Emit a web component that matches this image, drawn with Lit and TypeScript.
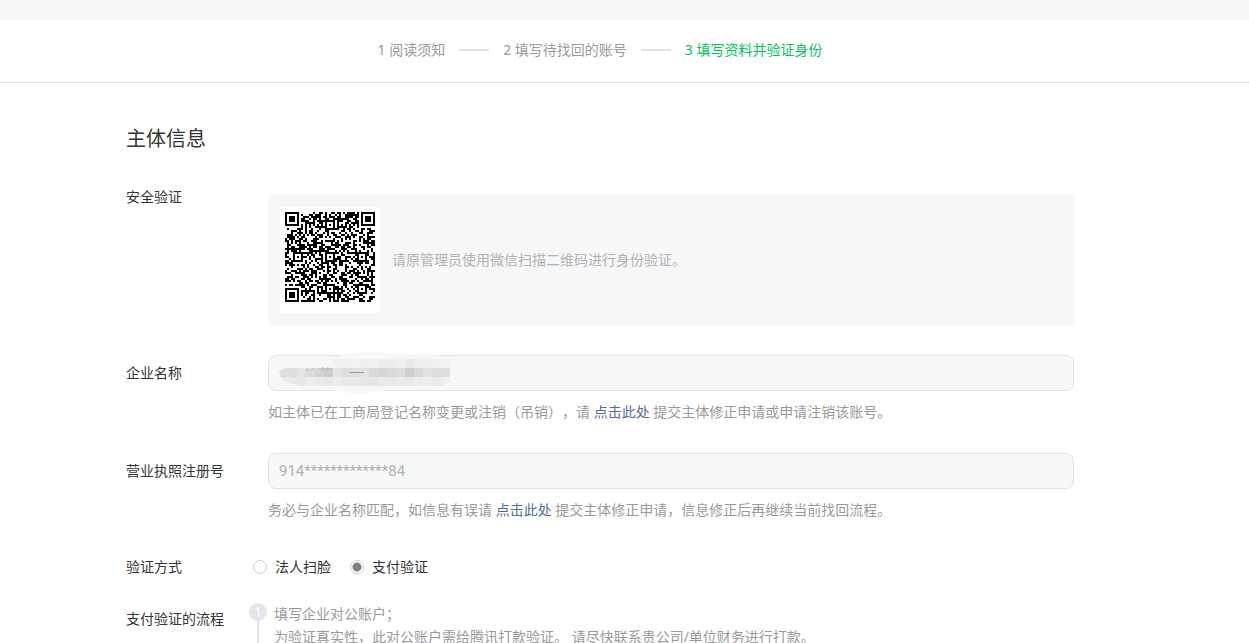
import { LitElement, html, svg, css } from "lit";
import { customElement, state } from "lit/decorators.js";

const QR_SIZE = 45;

/** Builds the dark modules of a 45 x 45 code as one SVG path. */
function buildQrPath(): string {
  const grid: boolean[][] = [];
  let seed = 20731;
  for (let y = 0; y < QR_SIZE; y++) {
    const row: boolean[] = [];
    for (let x = 0; x < QR_SIZE; x++) {
      seed = (seed * 1103515245 + 12345) % 2147483648;
      row.push(seed / 2147483648 > 0.47);
    }
    grid.push(row);
  }
  for (let i = 8; i < QR_SIZE - 8; i++) {
    grid[6][i] = i % 2 === 0;
    grid[i][6] = i % 2 === 0;
  }
  const square = (cx: number, cy: number, reach: number, light: number[]) => {
    for (let dy = -reach; dy <= reach; dy++) {
      for (let dx = -reach; dx <= reach; dx++) {
        const y = cy + dy;
        const x = cx + dx;
        if (y < 0 || x < 0 || y >= QR_SIZE || x >= QR_SIZE) continue;
        grid[y][x] = !light.includes(Math.max(Math.abs(dx), Math.abs(dy)));
      }
    }
  };
  for (const cy of [6, 22, 38]) {
    for (const cx of [6, 22, 38]) {
      if (cx + cy === 12 || (cx === 38 && cy === 6) || (cx === 6 && cy === 38)) continue;
      square(cx, cy, 2, [1]);
    }
  }
  square(3, 3, 4, [2, 4]);
  square(QR_SIZE - 4, 3, 4, [2, 4]);
  square(3, QR_SIZE - 4, 4, [2, 4]);

  let d = "";
  grid.forEach((row, y) =>
    row.forEach((dark, x) => {
      if (dark) d += `M${x} ${y}h1v1h-1z`;
    })
  );
  return d;
}

@customElement("qr-code")
export class QrCode extends LitElement {
  static styles = css`
    :host {
      display: block;
      flex: none;
      box-sizing: border-box;
      width: 100px;
      height: 106px;
      padding: 5px;
      background: #fff;
    }
    .code {
      display: block;
      width: 90px;
      height: 90px;
    }
  `;
  private path = buildQrPath();

  render() {
    return html`<svg class="code" viewBox="0 0 45 45" shape-rendering="crispEdges" role="img">
      <path d=${this.path} fill="#000"></path>
    </svg>`;
  }
}

/** Mosaic that hides the company name. */
@customElement("name-mosaic")
export class NameMosaic extends LitElement {
  static styles = css`
    :host {
      display: block;
      pointer-events: none;
    }
    .mosaic {
      display: block;
    }
  `;

  private rows: [number, number, string[]][] = [
    [7, 9, ["", "", "", "", "", "", "#f2f2f3", "#eff0f0", "#f2f3f3", "#eeefef", "#f0f0f1", "#ededee", "#eceded", "#eff0f1", "#e9eaeb", "#eeeff0", "#eceeef", "#eff1f2", "#f0f2f3"]],
    [16, 9, ["#dfdfe0", "#dddddd", "#e2e4e5", "#dcdcdd", "#d4d5d6", "#cccdce", "#e4e4e5", "#dedede", "#dfdfdf", "#e2e2e2", "#d9d9d9", "#d6d6d6", "#dadada", "#dcdcdc", "#cececf", "#d8d9da", "#e1e2e3", "#dcdddf", "#dddedf"]],
    [25, 9, ["#ebebec", "#e9e9ea", "#e4e8ea", "#ededee", "#e9eaeb", "#e9e9ea", "#ececec", "#e9e9e9", "#eaeaea", "#e6e6e6", "#e5e5e6", "#e9e9e9", "#e6e7e7", "#e9e9e9", "#e6e7e7", "#eaebec", "#edeeef", "#e9eaeb", "#edeff0"]],
  ];

  render() {
    return html`<svg class="mosaic" width="184" height="41" viewBox="0 0 184 41" aria-hidden="true">
      <defs>
        <clipPath id="blob">
          <path d="M4 19Q12 13 30 12L58 11V6H176V30Q168 32 166 37H62L38 35Q14 34 6 26Z"></path>
        </clipPath>
      </defs>
      <path d="M56 8Q66 0 92 0Q112 0 116 2H154Q164 2 168 7H175V31L160 38H112Q100 41 84 41Q62 41 56 37L30 34L8 27V17L30 11H56Z" fill="#f6f8f8"></path>
      <g clip-path="url(#blob)" shape-rendering="crispEdges">
        ${this.rows.map(([y, h, cells]) =>
          cells.map((fill, i) => (fill ? svg`<rect x=${4 + i * 9} y=${y} width="9" height=${h} fill=${fill}></rect>` : ""))
        )}
      </g>
      <path d="M31 17l3 2M39 16l-3 3M44 17h13M48 15v4M53 15v4" stroke="#b9bbbd" fill="none"></path>
      <path d="M75 20.500h14" stroke="#96989a" fill="none"></path>
    </svg>`;
  }
}

@customElement("form-row")
export class FormRow extends LitElement {
  static styles = css`
    :host {
      display: grid;
      grid-template-columns: 142px minmax(0, 1fr);
    }
    .label {
      line-height: var(--label-line, 20px);
      padding-top: var(--label-top, 0);
    }
  `;

  render() {
    return html`<div class="label"><slot name="label"></slot></div>
      <div><slot></slot></div>`;
  }
}

@customElement("app-root")
export class AppRoot extends LitElement {
  @state() private method = "pay";

  static styles = css`
    :host {
      display: block;
      height: 100vh;
      overflow: hidden;
      background: #fff;
      color: #353535;
      font: 14px/20px "Noto Sans", "Noto Sans CJK SC", sans-serif;
      text-spacing-trim: space-all;
    }
    .band {
      height: 20px;
      background: #f6f8f9;
    }
    .steps {
      display: flex;
      justify-content: center;
      align-items: center;
      gap: 14px;
      margin: 0;
      padding: 20px 175px 22px 126px;
      list-style: none;
      color: #9a9a9a;
      border-bottom: 1px solid #e0e3e6;
    }
    .step {
      display: flex;
      align-items: center;
      gap: 14px;
      white-space: nowrap;
    }
    .step + .step::before {
      content: "";
      width: 30px;
      height: 2px;
      background: #e0e3e6;
    }
    .current {
      color: #07c160;
    }
    .main {
      padding: 42px 175px 0 126px;
    }
    .title {
      margin: 0 0 34px;
      font-size: 20px;
      line-height: 28px;
      font-weight: 400;
    }
    .scan {
      display: flex;
      align-items: center;
      gap: 12px;
      margin: 8px 0 30px;
      padding: 12px;
      border-radius: 4px;
      background: #f6f7f9;
      color: #b2b2b2;
    }
    .tall {
      --label-line: 36px;
    }
    .field {
      position: relative;
    }
    .input {
      display: block;
      box-sizing: border-box;
      width: 100%;
      height: 36px;
      padding: 0 10px;
      border: 1px solid #e1e3e5;
      border-radius: 8px;
      background: #f6f7f9;
      color: #b2b2b2;
      font: 15px/20px Roboto, "Noto Sans CJK SC", sans-serif;
      outline: none;
    }
    .mask {
      position: absolute;
      left: 7px;
      top: -3px;
    }
    .help {
      margin: 11px 0 31px;
      color: #9a9a9a;
    }
    .link {
      color: #576b95;
      text-decoration: none;
    }
    .methods {
      display: flex;
      gap: 19px;
      margin: 6px 0 25px -15px;
    }
    .method-row {
      --label-top: 6px;
    }
    .choice {
      display: flex;
      align-items: center;
      gap: 8px;
    }
    .radio {
      appearance: none;
      box-sizing: border-box;
      width: 14px;
      height: 14px;
      margin: 0;
      border: 1px solid #cfcfcf;
      border-radius: 50%;
      background: #fff;
    }
    .radio:checked {
      background: radial-gradient(circle, #808080 0 4px, #fff 5px);
    }
    .flow-row {
      --label-top: 7px;
    }
    .flow {
      margin: 0 0 0 -19px;
      padding: 0;
      list-style: none;
      color: #9a9a9a;
      line-height: 23px;
    }
    .flow-item {
      display: grid;
      grid-template-columns: 18px minmax(0, 1fr);
      column-gap: 7px;
    }
    .marker {
      display: flex;
      flex-direction: column;
      align-items: center;
      padding-top: 1px;
    }
    .number {
      width: 18px;
      height: 18px;
      border-radius: 50%;
      background: #e4e5ea;
      color: #fff;
      line-height: 18px;
      text-align: center;
    }
    .marker::after {
      content: "";
      flex: 1;
      width: 2px;
      background: #e4e5ea;
    }
    .flow-text {
      padding-bottom: 24px;
    }
    .line {
      margin: 0;
    }
  `;

  private choice(value: string, text: string) {
    return html`<label class="choice">
      <input class="radio" type="radio" name="method" value=${value}
        .checked=${this.method === value}
        @change=${() => (this.method = value)} />
      ${text}
    </label>`;
  }

  render() {
    return html`
      <div class="band"></div>
      <ol class="steps">
        <li class="step">1 阅读须知</li>
        <li class="step">2 填写待找回的账号</li>
        <li class="step current" aria-current="step">3 填写资料并验证身份</li>
      </ol>
      <main class="main" lang="zh-CN">
        <h1 class="title">主体信息</h1>
        <form-row>
          <span slot="label">安全验证</span>
          <div class="scan">
            <qr-code></qr-code>
            <span>请原管理员使用微信扫描二维码进行身份验证。</span>
          </div>
        </form-row>
        <form-row class="tall">
          <label slot="label" for="company">企业名称</label>
          <div class="field">
            <input class="input" id="company" type="text" readonly />
            <name-mosaic class="mask"></name-mosaic>
          </div>
          <p class="help">如主体已在工商局登记名称变更或注销（吊销），请 <a class="link" href="#">点击此处</a> 提交主体修正申请或申请注销该账号。</p>
        </form-row>
        <form-row class="tall">
          <label slot="label" for="license">营业执照注册号</label>
          <input class="input" id="license" type="text" .value=${"914*************84"} readonly />
          <p class="help">务必与企业名称匹配，如信息有误请 <a class="link" href="#">点击此处</a> 提交主体修正申请，信息修正后再继续当前找回流程。</p>
        </form-row>
        <form-row class="method-row">
          <span slot="label" id="method-label">验证方式</span>
          <div class="methods" role="radiogroup" aria-labelledby="method-label">
            ${this.choice("face", "法人扫脸")}${this.choice("pay", "支付验证")}
          </div>
        </form-row>
        <form-row class="flow-row">
          <span slot="label">支付验证的流程</span>
          <ol class="flow">
            <li class="flow-item">
              <div class="marker"><span class="number">1</span></div>
              <div class="flow-text">
                <p class="line">填写企业对公账户；</p>
                <p class="line">为验证真实性，此对公账户需给腾讯打款验证。 请尽快联系贵公司/单位财务进行打款。</p>
              </div>
            </li>
          </ol>
        </form-row>
      </main>
    `;
  }
}
